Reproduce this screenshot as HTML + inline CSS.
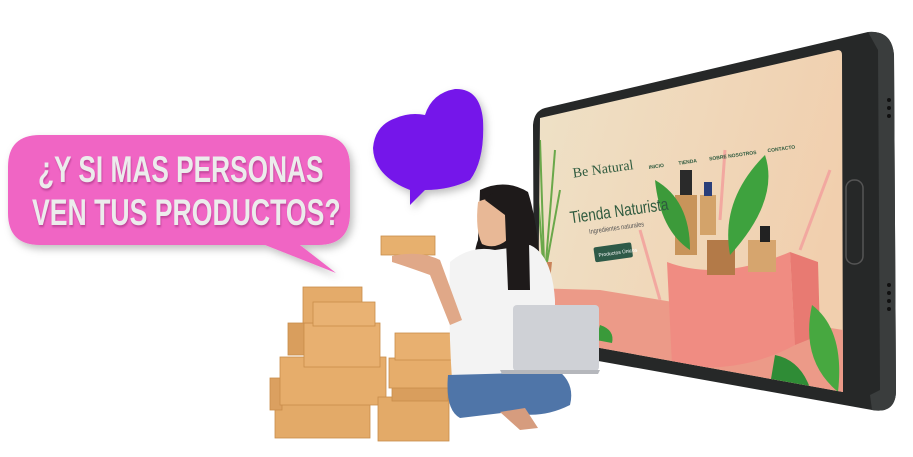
<!DOCTYPE html>
<html><head><meta charset="utf-8"><style>
html,body{margin:0;padding:0;background:#fff;}
body{width:913px;height:457px;overflow:hidden;position:relative;font-family:"Liberation Sans",sans-serif;}
svg{position:absolute;left:0;top:0;}
</style></head><body>
<svg width="913" height="457" viewBox="0 0 913 457" xmlns="http://www.w3.org/2000/svg">
<defs>
<linearGradient id="scr" x1="0" y1="0" x2="1" y2="0.3">
<stop offset="0" stop-color="#eee2c8"/><stop offset="1" stop-color="#f1cfae"/></linearGradient>
<filter id="sh" x="-20%" y="-20%" width="140%" height="140%"><feDropShadow dx="3" dy="4" stdDeviation="4" flood-color="#000" flood-opacity="0.25"/></filter>
</defs>

<g filter="url(#sh)">
<path d="M40 135 H318 Q350 135 350 167 V213 Q350 245 318 245 H300 L336 273 L265 245 H40 Q8 245 8 213 V167 Q8 135 40 135Z" fill="#f065c4"/>
</g>
<g font-family="Liberation Sans, sans-serif" font-weight="bold" fill="#ececec" font-size="37">
<text x="0" y="0" transform="translate(38,182) scale(0.71,1)" style="filter:drop-shadow(1px 2px 1px rgba(120,20,90,.4))">¿Y SI MAS PERSONAS</text>
<text x="0" y="0" transform="translate(32,225) scale(0.72,1)" style="filter:drop-shadow(1px 2px 1px rgba(120,20,90,.4))">VEN TUS PRODUCTOS?</text>
</g>

<g filter="url(#sh)">
<path d="M396 118 Q375 125 373 148 Q374 176 410 190 L410 205 L425 190 Q450 190 470 180 Q485 160 483 120 Q480 88 455 89 Q432 93 425 115 Q410 112 396 118Z" fill="#7417ea"/>
</g>

<path d="M545 108 L868 32 Q892 30 894 55 L896 392 Q895 414 872 410 L565 355 Q535 350 534 325 L533 125 Q534 111 545 108Z" fill="#262828"/>
<path d="M868 32 Q892 30 894 55 L896 392 Q895 414 872 410 L870 395 L880 390 L878 50Z" fill="#3a3d3d"/>
<rect x="846" y="180" width="17" height="84" rx="8" fill="none" stroke="#555" stroke-width="1.5"/>
<g fill="#111"><circle cx="889" cy="100" r="2"/><circle cx="889" cy="108" r="2"/><circle cx="889" cy="116" r="2"/><circle cx="889" cy="285" r="2"/><circle cx="889" cy="293" r="2"/><circle cx="889" cy="301" r="2"/><circle cx="889" cy="309" r="2"/></g>
<clipPath id="sc"><path d="M540 118 L838 50 Q842 50 842 55 L843 392 L600 348 L538 333Z"/></clipPath>
<g clip-path="url(#sc)">
<rect x="530" y="40" width="320" height="360" fill="url(#scr)"/>
<path d="M530 288 L600 290 L843 330 L843 400 L530 400Z" fill="#ec9a88"/>
<path d="M540 300 L548 300 L552 262 L536 262Z" fill="#c9835a"/>
<g stroke="#6aa84a" stroke-width="2" fill="none"><path d="M544 262 L540 140"/><path d="M546 262 L555 150"/><path d="M543 262 L536 170"/><path d="M547 262 L560 190"/></g>
<g stroke="#f2a8a0" stroke-width="3" fill="none"><path d="M660 300 L640 230"/><path d="M800 250 L830 170"/><path d="M720 220 L725 150"/></g>
<path d="M667 262 Q720 282 790 252 L795 345 Q740 375 672 365Z" fill="#f08c82"/>
<path d="M790 252 L818 262 L820 335 L795 345Z" fill="#e87a72"/>
<rect x="675" y="195" width="22" height="60" fill="#c8945a"/><rect x="680" y="170" width="12" height="25" fill="#2a2a2a"/>
<rect x="700" y="195" width="16" height="40" fill="#d3a36a"/><rect x="704" y="182" width="8" height="14" fill="#2a3f7a"/>
<rect x="707" y="240" width="28" height="35" fill="#b37a48"/><rect x="748" y="240" width="28" height="32" fill="#d6a56e"/>
<rect x="760" y="226" width="10" height="16" fill="#222"/>
<path d="M655 180 Q690 200 690 250 Q660 230 655 180Z" fill="#3c9a3a"/>
<path d="M765 155 Q780 200 730 255 Q720 200 765 155Z" fill="#3ea23e"/>
<path d="M812 305 Q845 330 838 392 Q800 360 812 305Z" fill="#47a840"/>
<path d="M775 355 Q800 360 810 388 L770 385Z" fill="#2f8c36"/>
<path d="M600 325 Q615 330 612 343 L596 340Z" fill="#3a9a3a"/>
<g transform="rotate(-8 700 180)" fill="#2e5a3e">
<text x="575" y="160" font-family="Liberation Serif,serif" font-size="14">Be Natural</text>
<text x="651" y="162" font-size="5" font-weight="bold">INICIO</text>
<text x="681" y="162" font-size="5" font-weight="bold">TIENDA</text>
<text x="712" y="162" font-size="5" font-weight="bold">SOBRE NOSOTROS</text>
<text x="771" y="162" font-size="5" font-weight="bold">CONTACTO</text>
<text x="0" y="0" transform="translate(566,205) scale(0.8,1)" font-size="17">Tienda Naturista</text>
<text x="0" y="0" transform="translate(583,218) scale(0.8,1)" font-size="7" fill="#555">Ingredientes naturales</text>
<rect x="585" y="232" width="38" height="15" rx="2" fill="#2e5a48"/>
<text x="589" y="242" font-size="5" fill="#fff">Productos Únicos</text>
</g>
</g>

<g stroke="#c98d4a" stroke-width="0.8">
<rect x="275" y="397" width="95" height="41" fill="#e3aa68"/>
<rect x="270" y="378" width="12" height="32" fill="#dba060"/>
<rect x="280" y="357" width="106" height="48" fill="#e6ad6b"/>
<rect x="288" y="323" width="16" height="32" fill="#d99e5d"/>
<rect x="304" y="323" width="76" height="44" fill="#e8b070"/>
<rect x="303" y="287" width="59" height="36" fill="#e4ab6a"/>
<rect x="313" y="302" width="62" height="24" fill="#e9b273"/>
<rect x="378" y="397" width="71" height="44" fill="#e3aa68"/>
<rect x="392" y="382" width="56" height="19" fill="#d99e5d"/>
<rect x="389" y="358" width="65" height="30" fill="#e6ad6b"/>
<rect x="395" y="333" width="57" height="27" fill="#e8b070"/>
<rect x="381" y="236" width="54" height="19" fill="#e7b06e"/>
</g>

<path d="M480 190 Q505 178 528 192 Q540 230 542 300 L520 305 L478 310 Q470 260 478 240Z" fill="#1e1a1a"/>
<path d="M450 262 Q470 245 495 250 L530 245 Q552 255 555 300 L555 380 L452 380 Q448 320 450 262Z" fill="#f3f3f3"/>
<path d="M478 202 Q490 195 505 205 L507 240 Q495 250 482 244 Q475 230 478 202Z" fill="#e8b896"/>
<path d="M485 200 Q495 185 528 195 L530 290 L508 290 L505 215Z" fill="#1e1a1a"/>
<path d="M392 256 Q420 250 440 260 L462 320 L450 325 L430 275 Q405 266 392 262Z" fill="#e0a888"/>
<path d="M448 375 L560 372 Q575 385 570 405 Q540 420 510 412 L460 418 Q445 410 448 375Z" fill="#4f75a8"/>
<path d="M500 412 L525 408 L538 428 L520 430Z" fill="#d69c7e"/>
<rect x="513" y="305" width="86" height="66" rx="4" fill="#cfd1d6"/>
<path d="M500 370 L600 370 L598 374 L502 374Z" fill="#b5b7bc"/>
</svg>
</body></html>
